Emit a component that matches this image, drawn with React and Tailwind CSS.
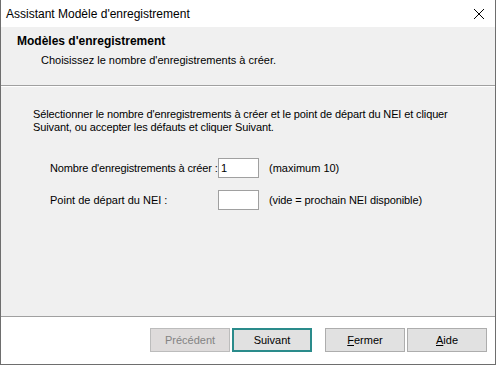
import React from 'react';

const ui = { fontFamily: '"Liberation Sans", Arial, sans-serif' };

function WizardButton({ children, disabled, primary }) {
  let cls = 'w-[80px] h-[24px] flex items-center justify-center text-[11px] ';
  if (disabled) cls += 'bg-[#dedbdb] border border-[#bcbcbc] text-[#838383]';
  else if (primary) cls += 'bg-[#e1e1e1] border-2 border-[#2a8b8b] text-black';
  else cls += 'bg-[#e1e1e1] border border-[#adadad] text-black';
  return (
    <button className={cls} style={ui}>
      {children}
    </button>
  );
}

export default function App() {
  return (
    <div
      className="w-[496px] h-[365px] flex flex-col bg-white border-l border-r border-b border-[#6e6e6e] overflow-hidden"
      style={ui}
    >
      {/* Title bar */}
      <div className="h-[27px] shrink-0 flex items-center justify-between pl-[5px] pr-[9px] bg-white">
        <span className="text-[12px] text-black">Assistant Modèle d'enregistrement</span>
        <svg width="12" height="12" viewBox="0 0 12 12" className="mr-[1px]">
          <path d="M1 1 L11 11 M11 1 L1 11" stroke="#000" strokeWidth="1" fill="none" />
        </svg>
      </div>

      {/* Header */}
      <div className="h-[59px] shrink-0 bg-[#f0f0f0] border-b border-[#a0a0a0] pl-[16px] pt-[7px]">
        <div className="text-[12px] font-bold text-black leading-[15px]">Modèles d'enregistrement</div>
        <div className="text-[11px] text-black leading-[14px] pl-[24px] mt-[4px]">
          Choisissez le nombre d'enregistrements à créer.
        </div>
      </div>

      {/* Body */}
      <div className="flex-1 bg-[#f0f0f0] border-t border-white border-b-[#a0a0a0] border-b pl-[32px] pt-[21px]">
        <p className="text-[11px] leading-[13px] tracking-[-0.12px] text-black w-[440px]">
          Sélectionner le nombre d'enregistrements à créer et le point de départ du NEI et cliquer
          Suivant, ou accepter les défauts et cliquer Suivant.
        </p>
        <div className="mt-[24px] flex flex-col gap-[12px] pl-[17px]">
          <div className="flex items-center h-[20px]">
            <span className="w-[168px] shrink-0 whitespace-nowrap text-[11px] tracking-[-0.15px]">Nombre d'enregistrements à créer :</span>
            <div className="w-[41px] h-[20px] shrink-0 bg-white border border-[#a0a0a0] text-[11px] pl-[2px] flex items-center">1</div>
            <span className="ml-[10px] text-[11px]">(maximum 10)</span>
          </div>
          <div className="flex items-center h-[20px]">
            <span className="w-[168px] shrink-0 whitespace-nowrap text-[11px]">Point de départ du NEI :</span>
            <div className="w-[41px] h-[20px] shrink-0 bg-white border border-[#a0a0a0]"></div>
            <span className="ml-[10px] text-[11px] tracking-[-0.1px]">(vide = prochain NEI disponible)</span>
          </div>
        </div>
      </div>

      {/* Footer */}
      <div className="h-[47px] shrink-0 bg-white flex items-start justify-end pt-[11px] pr-[8px]">
        <WizardButton disabled>Précédent</WizardButton>
        <div className="ml-[2px]">
          <WizardButton primary>Suivant</WizardButton>
        </div>
        <div className="ml-[13px]">
          <WizardButton>
            <span><u>F</u>ermer</span>
          </WizardButton>
        </div>
        <div className="ml-[2px]">
          <WizardButton>
            <span><u>A</u>ide</span>
          </WizardButton>
        </div>
      </div>
    </div>
  );
}
